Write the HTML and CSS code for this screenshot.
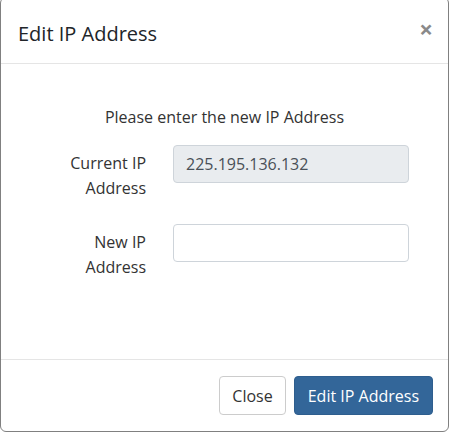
FILE: index.html
```html
<!DOCTYPE html>
<html>
<head>
<meta charset="utf-8">
<link rel="stylesheet" href="styles.css">
</head>
<body>
<div class="modal">
  <div class="modal-header">
    <h4 class="modal-title">Edit IP Address</h4>
    <button class="close" type="button" aria-label="Close">&times;</button>
  </div>
  <div class="modal-body">
    <p class="intro">Please enter the new IP Address</p>
    <div class="form-row">
      <label class="form-label">Current IP<br>Address</label>
      <div class="form-field"><input class="form-control" type="text" value="225.195.136.132" disabled></div>
    </div>
    <div class="form-row">
      <label class="form-label">New IP<br>Address</label>
      <div class="form-field"><input class="form-control" type="text" value=""></div>
    </div>
  </div>
  <div class="modal-footer">
    <button class="btn btn-default" type="button">Close</button>
    <button class="btn btn-primary" type="button">Edit IP Address</button>
  </div>
</div>
</body>
</html>
```
FILE: styles.css
```css
* { box-sizing: border-box; }
html, body { margin: 0; padding: 0; background: #fff; }
body {
  font-family: "Open Sans", "Noto Sans", sans-serif;
  font-size: 16px;
  color: #333;
  width: 449px;
  height: 432px;
  overflow: hidden;
}
.modal {
  margin-top: -3px;
  width: 449px;
  height: 435px;
  border: 1px solid #808080;
  border-radius: 6px;
  background: #fff;
  display: flex;
  flex-direction: column;
}
.modal-header {
  flex: none;
  height: 66px;
  padding: 0 15px 0 17px;
  border-bottom: 1px solid #e5e5e5;
  display: flex;
  align-items: center;
  justify-content: space-between;
}
.modal-title {
  margin: 6px 0 0 0;
  font-size: 20px;
  font-weight: 400;
  color: #212529;
}
.close {
  border: 0;
  background: none;
  padding: 0;
  margin: 0 0 3px 0;
  font-family: "Open Sans", sans-serif;
  font-size: 24px;
  font-weight: 700;
  line-height: 1;
  color: #8a8a8a;
}
.modal-body {
  flex: 1;
  padding: 41px 15px 0 15px;
}
.intro {
  margin: 0 0 16px 0;
  text-align: center;
  line-height: 24px;
}
.form-row {
  display: flex;
  align-items: flex-start;
  margin-bottom: 23px;
}
.form-label {
  width: 130px;
  text-align: right;
  padding-top: 6px;
  line-height: 25px;
  margin-right: 27px;
}
.form-field { width: 236px; }
.form-control {
  display: block;
  width: 236px;
  height: 38px;
  padding: 0 12px;
  font-family: "Open Sans", sans-serif;
  font-size: 16px;
  color: #495057;
  border: 1px solid #ced4da;
  border-radius: 4px;
  background: #fff;
}
.form-control:disabled { background: #e9ecef; color: #495057; opacity: 1; }
.modal-footer {
  flex: none;
  height: 72px;
  border-top: 1px solid #e5e5e5;
  padding: 0 15px 0 0;
  display: flex;
  align-items: center;
  justify-content: flex-end;
  gap: 8px;
}
.btn {
  height: 39px;
  padding: 0 12px;
  font-family: "Open Sans", sans-serif;
  font-size: 16px;
  border-radius: 4px;
  border: 1px solid #ccc;
  cursor: pointer;
}
.btn-default { background: #fff; color: #333; }
.btn-primary { background: #336699; border-color: #2e5e8e; color: #fff; padding: 0 13px; }
```
